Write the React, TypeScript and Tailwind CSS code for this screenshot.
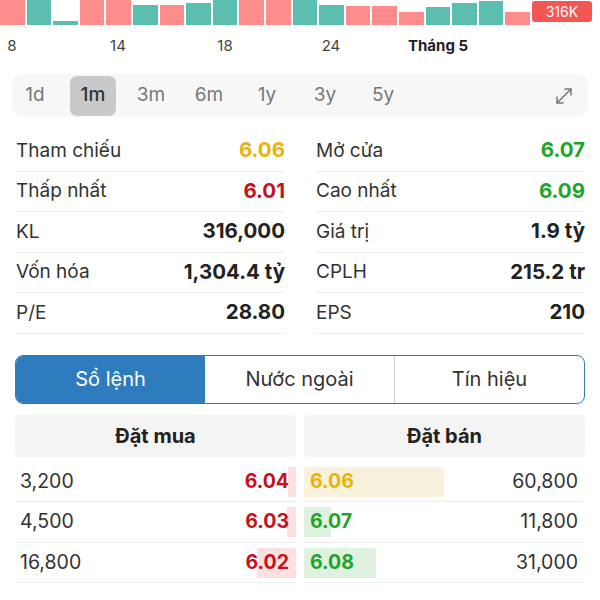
import React from "react";
import { MoveDiagonal } from "lucide-react";

const bars: { h: string; c: "r" | "g" }[] = [
  { h: "h-[25px]", c: "r" },
  { h: "h-[25px]", c: "g" },
  { h: "h-[4px]", c: "g" },
  { h: "h-[25px]", c: "r" },
  { h: "h-[25px]", c: "r" },
  { h: "h-[20px]", c: "g" },
  { h: "h-[20px]", c: "r" },
  { h: "h-[22px]", c: "g" },
  { h: "h-[25px]", c: "g" },
  { h: "h-[25px]", c: "r" },
  { h: "h-[25px]", c: "r" },
  { h: "h-[25px]", c: "g" },
  { h: "h-[20px]", c: "g" },
  { h: "h-[19px]", c: "r" },
  { h: "h-[19px]", c: "r" },
  { h: "h-[13px]", c: "r" },
  { h: "h-[18px]", c: "g" },
  { h: "h-[22px]", c: "g" },
  { h: "h-[24px]", c: "g" },
  { h: "h-[13px]", c: "r" },
];

const periods = ["1d", "1m", "3m", "6m", "1y", "3y", "5y"];

const left = [
  { l: "Tham chiếu", v: "6.06", c: "text-[#e9b20e]" },
  { l: "Thấp nhất", v: "6.01", c: "text-[#c4121d]" },
  { l: "KL", v: "316,000", c: "text-[#222]" },
  { l: "Vốn hóa", v: "1,304.4 tỷ", c: "text-[#222]" },
  { l: "P/E", v: "28.80", c: "text-[#222]" },
];
const right = [
  { l: "Mở cửa", v: "6.07", c: "text-[#1ea52a]" },
  { l: "Cao nhất", v: "6.09", c: "text-[#1ea52a]" },
  { l: "Giá trị", v: "1.9 tỷ", c: "text-[#222]" },
  { l: "CPLH", v: "215.2 tr", c: "text-[#222]" },
  { l: "EPS", v: "210", c: "text-[#222]" },
];

const buys = [
  { q: "3,200", p: "6.04", w: "w-[8px]" },
  { q: "4,500", p: "6.03", w: "w-[9px]" },
  { q: "16,800", p: "6.02", w: "w-[39px]" },
];
const sells = [
  { q: "60,800", p: "6.06", w: "w-[140px]", c: "text-[#e9b20e]", bg: "bg-[#f8f2dd]" },
  { q: "11,800", p: "6.07", w: "w-[27px]", c: "text-[#1ea52a]", bg: "bg-[#dff2e1]" },
  { q: "31,000", p: "6.08", w: "w-[72px]", c: "text-[#1ea52a]", bg: "bg-[#dff2e1]" },
];

function StatCol({ rows }: { rows: typeof left }) {
  return (
    <div className="flex flex-col">
      {rows.map((r) => (
        <div
          key={r.l}
          className="flex h-[40.5px] items-center justify-between border-b border-[#ececec] pl-[1px]"
        >
          <span className="text-[19px] text-[#333]">{r.l}</span>
          <span className={`text-[20.5px] font-bold ${r.c}`}>{r.v}</span>
        </div>
      ))}
    </div>
  );
}

export default function App() {
  return (
    <div
      className="h-[600px] w-[600px] overflow-hidden bg-white"
      style={{ fontFamily: "Inter, 'Noto Sans', sans-serif" }}
    >
      {/* volume chart */}
      <div className="flex h-[25px] items-end gap-[2px]">
        {bars.map((b, i) => (
          <div
            key={i}
            className={`w-[24.6px] shrink-0 ${b.h} ${b.c === "r" ? "bg-[#fd8d8d]" : "bg-[#5bbeb0]"}`}
          />
        ))}
        <div className="mt-[1px] flex h-[21px] w-[60px] shrink-0 items-center justify-center self-start rounded-[3px] bg-[#f45656] text-[14px] text-white">
          316K
        </div>
      </div>
      <div className="relative h-[49px] text-[15px] text-[#444]">
        <span className="absolute left-[12px] top-[10px] -translate-x-1/2">8</span>
        <span className="absolute left-[118px] top-[10px] -translate-x-1/2">14</span>
        <span className="absolute left-[225px] top-[10px] -translate-x-1/2">18</span>
        <span className="absolute left-[331px] top-[10px] -translate-x-1/2">24</span>
        <span className="absolute left-[438px] top-[10px] -translate-x-1/2 font-bold text-[#222]">
          Tháng 5
        </span>
      </div>

      {/* period selector */}
      <div className="mx-[12px] flex h-[43px] items-center gap-[12px] rounded-[12px] bg-[#f7f7f7] pr-[12px]">
        {periods.map((p) => (
          <div
            key={p}
            className={`flex h-[40px] w-[46px] items-center justify-center rounded-[7px] text-[19px] ${
              p === "1m" ? "bg-[#c9c9c9] font-medium text-[#333]" : "text-[#777]"
            }`}
          >
            {p}
          </div>
        ))}
        <div className="ml-auto flex items-center text-[#777]">
          <MoveDiagonal size={24} strokeWidth={1.5} />
        </div>
      </div>

      {/* stats */}
      <div className="mx-[15px] mt-[14px] grid grid-cols-2 gap-[30px]">
        <StatCol rows={left} />
        <StatCol rows={right} />
      </div>

      {/* segmented tabs */}
      <div className="mx-[15px] mt-[21px] flex h-[49px] overflow-hidden rounded-[8px] border border-[#2e7cbe] text-[20px]">
        <div className="flex flex-1 items-center justify-center bg-[#2e7cbe] text-white">Sổ lệnh</div>
        <div className="flex flex-1 items-center justify-center border-r border-[#cfcfcf] text-[#333]">
          Nước ngoài
        </div>
        <div className="flex flex-1 items-center justify-center text-[#333]">Tín hiệu</div>
      </div>

      {/* order book */}
      <div className="mx-[15px] mt-[11px] grid grid-cols-2 gap-[8px]">
        <div className="flex flex-col">
          <div className="flex h-[42px] items-center justify-center rounded-[3px] bg-[#f4f4f4] text-[20px] font-bold text-[#222]">
            Đặt mua
          </div>
          <div className="mt-[5px] flex flex-col">
            {buys.map((b) => (
              <div
                key={b.p}
                className="relative flex h-[40.5px] items-center justify-between border-b border-[#ececec] pl-[5px] pr-[7px]"
              >
                <div className={`absolute right-0 top-[5px] h-[30px] ${b.w} bg-[#fde1e1]`} />
                <span className="relative text-[19.5px] text-[#333]">{b.q}</span>
                <span className="relative text-[19.5px] font-bold text-[#c4121d]">{b.p}</span>
              </div>
            ))}
          </div>
        </div>
        <div className="flex flex-col">
          <div className="flex h-[42px] items-center justify-center rounded-[3px] bg-[#f4f4f4] text-[20px] font-bold text-[#222]">
            Đặt bán
          </div>
          <div className="mt-[5px] flex flex-col pr-[2px]">
            {sells.map((s) => (
              <div
                key={s.p}
                className="relative flex h-[40.5px] items-center justify-between border-b border-[#ececec] pl-[6px] pr-[5px]"
              >
                <div className={`absolute left-0 top-[5px] h-[30px] ${s.w} ${s.bg}`} />
                <span className={`relative text-[19.5px] font-bold ${s.c}`}>{s.p}</span>
                <span className="relative text-[19.5px] text-[#333]">{s.q}</span>
              </div>
            ))}
          </div>
        </div>
      </div>
    </div>
  );
}
